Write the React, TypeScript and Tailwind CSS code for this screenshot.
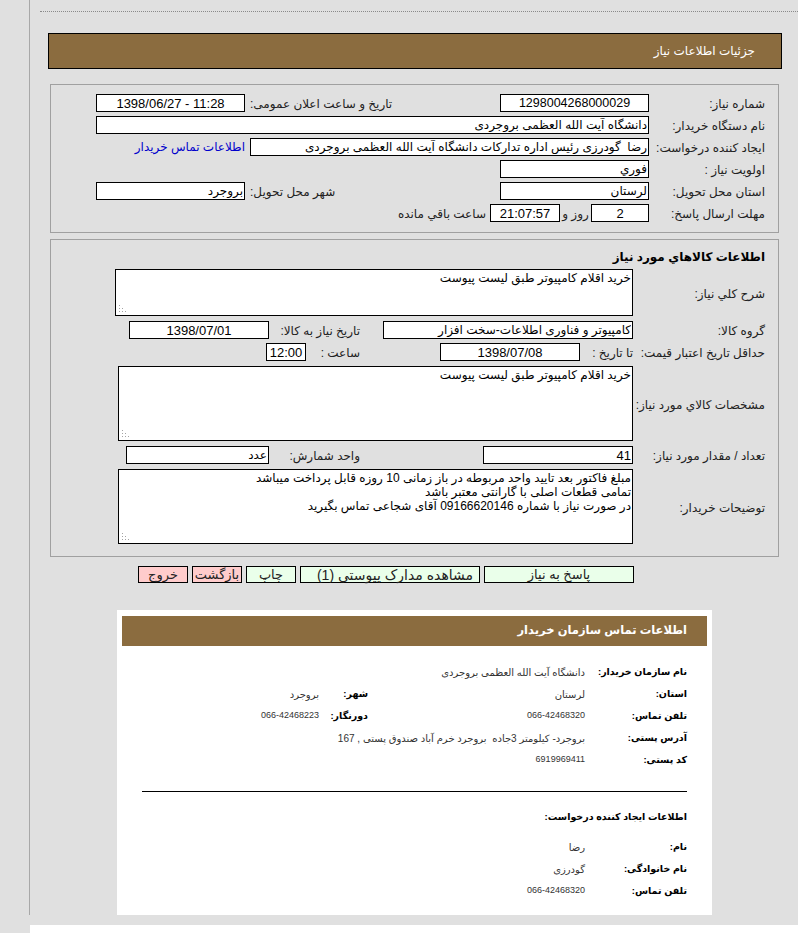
const Box = ({ value, className = '', ltr }: { value: string; className?: string; ltr?: boolean }) => (
  <input
    readOnly
    dir={ltr ? 'ltr' : 'rtl'}
    value={value}
    className={`h-[18px] shrink-0 border border-black bg-white px-px leading-none text-black outline-none ${className}`}
  />
);

// read-only textarea with the old resize grip drawn over its bottom left corner
const Area = ({ value, className = '' }: { value: string; className?: string }) => (
  <div className={`relative shrink-0 ${className}`}>
    <textarea
      readOnly
      dir="rtl"
      value={value}
      className="block h-full w-full resize-none overflow-hidden border border-black bg-white px-px pt-px text-[12px] leading-[14px] text-black outline-none"
    />
    <svg className="absolute bottom-[3px] left-[4px]" width="8" height="8" viewBox="0 0 8 8" fill="#a4a4a4">
      <rect x="0" y="0" width="1" height="1" />
      <rect x="0" y="3" width="1" height="1" />
      <rect x="3" y="3" width="1" height="1" />
      <rect x="0" y="6" width="1" height="1" />
      <rect x="3" y="6" width="1" height="1" />
      <rect x="6" y="6" width="1" height="1" />
    </svg>
  </div>
);

const Label = ({ text, className = '' }: { text: string; className?: string }) => (
  <span className={`shrink-0 whitespace-nowrap pt-[2px] text-[12px] leading-none text-[#222] ${className}`}>{text}</span>
);

const Row = ({ className = '', children }: { className?: string; children: React.ReactNode }) => (
  <div className={`flex h-[18px] items-center ${className}`}>{children}</div>
);

const CardValue = ({ text, className = '' }: { text: string; className?: string }) => (
  <span className={`whitespace-pre text-[#333] ${/^[\d-]+$/.test(text) ? 'text-[9px]' : 'text-[10px]'} ${className}`}>{text}</span>
);

const CardRow = ({ label, value, label2, value2 }: { label: string; value: string; label2?: string; value2?: string }) => (
  <div className="flex h-[22px] items-center">
    <span className="w-[102px] shrink-0 whitespace-nowrap text-[9.5px] font-bold text-black">{label}</span>
    <CardValue text={value} className="w-[217px] shrink-0" />
    {label2 && <span className="w-[49px] shrink-0 whitespace-nowrap text-[9.5px] font-bold text-black">{label2}</span>}
    {value2 && <CardValue text={value2} />}
  </div>
);

const Btn = ({ text, className, pink }: { text: string; className: string; pink?: boolean }) => (
  <button
    className={`h-[17px] shrink-0 border border-black leading-none text-[#222] ${className} ${
      pink ? 'bg-[#ffcccc]' : 'bg-[#eaffea]'
    }`}
  >
    {text}
  </button>
);

export default function App() {
  return (
    <div className="flex h-[933px] w-[798px] flex-col overflow-hidden bg-[#e0e0e0] font-['Liberation_Sans','DejaVu_Sans',sans-serif]">
      <div className="flex h-[915px] shrink-0">
        <div className="w-[30px] shrink-0 border-r border-[#a8a8a8]" />
        <div className="min-w-0 flex-1">
          <div className="ml-[10px] mt-[11px] border-t border-dotted border-[#8a8a8a]" />

          {/* page title */}
          <div dir="rtl" className="ml-[18px] mt-[21px] flex h-[36px] w-[734px] items-center border border-black bg-[#8b6c3f] pr-[26px] text-[12px] text-white">
            جزئیات اطلاعات نیاز
          </div>

          {/* need details */}
          <div dir="rtl" className="ml-[20px] mt-[15px] flex h-[149px] w-[729px] flex-col gap-[4px] border border-[#a0a0a0] pr-[13px] pt-[9px]">
            <Row>
              <Label text="شماره نیاز:" className="w-[116px]" />
              <Box value="1298004268000029" className="w-[149px] text-center text-[12.5px]" />
              <div className="flex w-[255px] shrink-0 justify-end pl-[5px]">
                <Label text="تاریخ و ساعت اعلان عمومی:" />
              </div>
              <Box ltr value="1398/06/27 - 11:28" className="w-[149px] text-center text-[13px]" />
            </Row>
            <Row>
              <Label text="نام دستگاه خریدار:" className="w-[116px]" />
              <Box value="دانشگاه آیت الله العظمی بروجردی" className="w-[553px] text-[12px]" />
            </Row>
            <Row>
              <Label text="ایجاد کننده درخواست:" className="w-[116px]" />
              <Box value="رضا  گودرزی رئیس اداره تدارکات دانشگاه آیت الله العظمی بروجردی" className="w-[399px] text-[12px]" />
              <a className="mr-[5px] whitespace-nowrap text-[12px] leading-none text-[#0000cc]">اطلاعات تماس خریدار</a>
            </Row>
            <Row>
              <Label text="اولویت نیاز :" className="w-[116px]" />
              <Box value="فوري" className="w-[149px] text-[12px]" />
            </Row>
            <Row>
              <Label text="استان محل تحویل:" className="w-[116px]" />
              <Box value="لرستان" className="w-[149px] text-[12px]" />
              <div className="flex w-[255px] shrink-0 justify-end pl-[5px]">
                <Label text="شهر محل تحویل:" />
              </div>
              <Box value="بروجرد" className="w-[149px] text-[12px]" />
            </Row>
            <Row>
              <Label text="مهلت ارسال پاسخ:" className="w-[116px]" />
              <Box value="2" className="w-[58px] text-center text-[13px]" />
              <Label text="روز و" className="w-[31px] text-center" />
              <Box value="21:07:57" className="w-[70px] text-center text-[13px]" />
              <Label text="ساعت باقي مانده" className="mr-[4px]" />
            </Row>
          </div>

          {/* goods details */}
          <div dir="rtl" className="ml-[20px] mt-[6px] flex h-[318px] w-[729px] flex-col border border-[#a0a0a0] pr-[13px] pt-[9px]">
            <div className="h-[20px] text-[12px] font-bold leading-4 text-black">اطلاعات کالاهاي مورد نياز</div>
            <div className="flex items-center">
              <Label text="شرح کلي نياز:" className="w-[132px]" />
              <Area value="خرید اقلام کامپیوتر طبق لیست پیوست" className="h-[47px] w-[518px]" />
            </div>
            <Row className="mt-[5px]">
              <Label text="گروه کالا:" className="w-[132px]" />
              <Box value="کامپیوتر و فناوری اطلاعات-سخت افزار" className="w-[250px] text-[12px]" />
              <Label text="تاریخ نیاز به کالا:" className="mr-[23px] w-[91px]" />
              <Box value="1398/07/01" className="w-[140px] text-center text-[13px]" />
            </Row>
            <Row className="mt-[4px]">
              <Label text="حداقل تاریخ اعتبار قیمت:" className="w-[132px]" />
              <Label text="تا تاریخ :" className="w-[53px]" />
              <Box value="1398/07/08" className="w-[140px] text-center text-[13px]" />
              <Label text="ساعت :" className="mr-[80px] w-[54px]" />
              <Box value="12:00" className="w-[40px] text-center text-[13px]" />
            </Row>
            <div className="mt-[5px] flex items-center">
              <Label text="مشخصات کالاي مورد نياز:" className="w-[132px]" />
              <Area value="خرید اقلام کامپیوتر طبق لیست پیوست" className="h-[75px] w-[515px]" />
            </div>
            <Row className="mt-[5px]">
              <Label text="تعداد / مقدار مورد نیاز:" className="w-[132px]" />
              <Box value="41" className="w-[150px] text-[13px]" />
              <Label text="واحد شمارش:" className="mr-[123px] w-[91px]" />
              <Box value="عدد" className="w-[143px] text-[12px]" />
            </Row>
            <div className="mt-[5px] flex items-center">
              <Label text="توضیحات خریدار:" className="w-[132px]" />
              <Area
                value={'مبلغ فاکتور بعد تایید واحد مربوطه در باز زمانی 10 روزه قابل پرداخت میباشد\nتمامی قطعات اصلی با گارانتی معتبر باشد\nدر صورت نیاز با شماره 09166620146 آقای شجاعی تماس بگیرید'}
                className="h-[75px] w-[515px]"
              />
            </div>
          </div>

          {/* actions */}
          <div dir="rtl" className="mt-[9px] flex gap-[4px] pr-[164px]">
            <Btn text="پاسخ به نیاز" className="w-[150px] text-[13px]" />
            <Btn text="مشاهده مدارک پیوستي (1)" className="w-[180px] pl-[10px] text-[14px] tracking-[0.2px]" />
            <Btn text="چاپ" className="w-[50px] text-[13px]" />
            <Btn text="بازگشت" className="w-[50px] text-[13px]" pink />
            <Btn text="خروج" className="w-[50px] text-[13px]" pink />
          </div>

          {/* buyer contact card */}
          <div dir="rtl" className="ml-[87px] mt-[27px] h-[305px] w-[595px] bg-white px-[5px] pt-[6px]">
            <div className="flex h-[30px] items-center bg-[#8b6c3f] pr-[20px] text-[11.5px] font-bold text-white">
              اطلاعات تماس سازمان خریدار
            </div>
            <div className="mt-[15px] pr-[20px]">
              <CardRow label="نام سازمان خریدار:" value="دانشگاه آیت الله العظمی بروجردی" />
              <CardRow label="استان:" value="لرستان" label2="شهر:" value2="بروجرد" />
              <CardRow label="تلفن تماس:" value="066-42468320" label2="دورنگار:" value2="066-42468223" />
              <CardRow label="آدرس پستی:" value="بروجرد- کیلومتر 3جاده  بروجرد خرم آباد صندوق پستی , 167" />
              <CardRow label="کد پستی:" value="6919969411" />
            </div>
            <div className="ml-[20px] mr-[20px] mt-[20px] border-t border-black" />
            <div className="mr-[20px] mt-[17px] text-[9.5px] font-bold leading-4 text-black">اطلاعات ایجاد کننده درخواست:</div>
            <div className="mt-[11px] pr-[20px]">
              <CardRow label="نام:" value="رضا" />
              <CardRow label="نام خانوادگی:" value="گودرزی" />
              <CardRow label="تلفن تماس:" value="066-42468320" />
            </div>
          </div>
        </div>
      </div>
      <div className="ml-[30px] mt-[10px] flex-1 bg-white" />
    </div>
  );
}
